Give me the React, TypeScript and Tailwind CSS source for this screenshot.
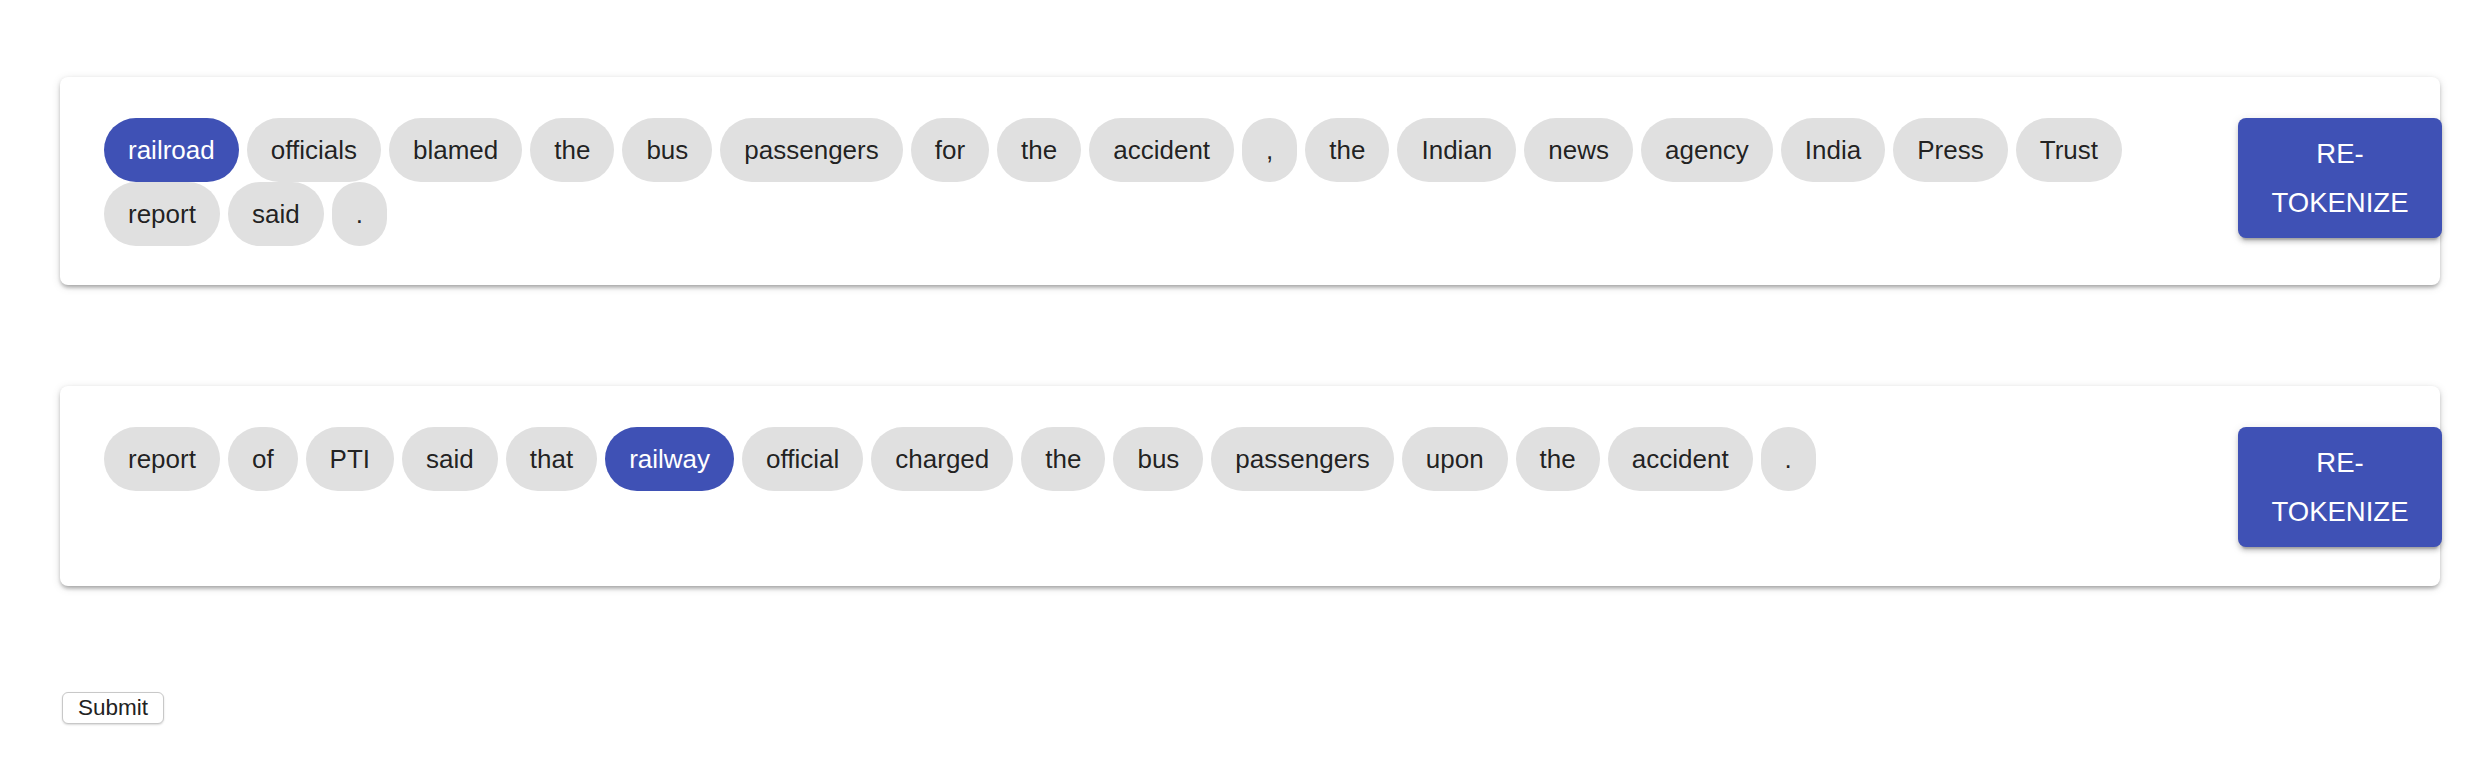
const sentences: { tokens: string[]; selected: number }[] = [
  {
    tokens: [
      "railroad", "officials", "blamed", "the", "bus", "passengers", "for", "the", "accident", ",",
      "the", "Indian", "news", "agency", "India", "Press", "Trust", "report", "said", ".",
    ],
    selected: 0,
  },
  {
    tokens: [
      "report", "of", "PTI", "said", "that", "railway", "official", "charged", "the", "bus",
      "passengers", "upon", "the", "accident", ".",
    ],
    selected: 5,
  },
];

const Chip = ({ label, active }: { label: string; active: boolean }) => (
  <div
    className={
      active
        ? "h-[64px] px-[24px] rounded-[32px] flex items-center bg-[#3f51b5] text-white text-[26px] leading-none"
        : "h-[64px] px-[24px] rounded-[32px] flex items-center bg-[#e0e0e0] text-[rgba(0,0,0,0.87)] text-[26px] leading-none"
    }
  >
    {label}
  </div>
);

const SentenceCard = ({ tokens, selected }: { tokens: string[]; selected: number }) => (
  <div className="w-[2380px] bg-white rounded-[8px] pl-[44px] pt-[41px] pb-[39px] flex items-start shadow-[0_4px_4px_-2px_rgba(0,0,0,0.2),0_2px_4px_0_rgba(0,0,0,0.14),0_2px_10px_0_rgba(0,0,0,0.12)]">
    <div className="flex-1 flex flex-wrap gap-x-[8px] gap-y-0 pr-[60px]">
      {tokens.map((t, i) => (
        <Chip key={i} label={t} active={i === selected} />
      ))}
    </div>
    <button className="w-[204px] h-[120px] mr-[-2px] shrink-0 rounded-[8px] bg-[#3f51b5] text-white text-[27.5px] leading-[49px] uppercase px-[32px] shadow-[0_6px_2px_-4px_rgba(0,0,0,0.2),0_4px_4px_0_rgba(0,0,0,0.14),0_2px_10px_0_rgba(0,0,0,0.12)]">
      RE-
      <br />
      TOKENIZE
    </button>
  </div>
);

export default function App() {
  return (
    <div className="min-h-[764px] bg-white font-['Liberation_Sans',Arial,sans-serif]">
      <div className="pl-[60px] pt-[77px] flex flex-col gap-[101px]">
        {sentences.map((s, i) => (
          <SentenceCard key={i} tokens={s.tokens} selected={s.selected} />
        ))}
      </div>
      <div className="pl-[62px] pt-[106px]">
        <button className="w-[102px] h-[32px] rounded-[6px] border border-[#c8c8c8] bg-white text-[#222] text-[22.5px] leading-none shadow-[0_1px_2px_rgba(0,0,0,0.15)]">
          Submit
        </button>
      </div>
    </div>
  );
}
